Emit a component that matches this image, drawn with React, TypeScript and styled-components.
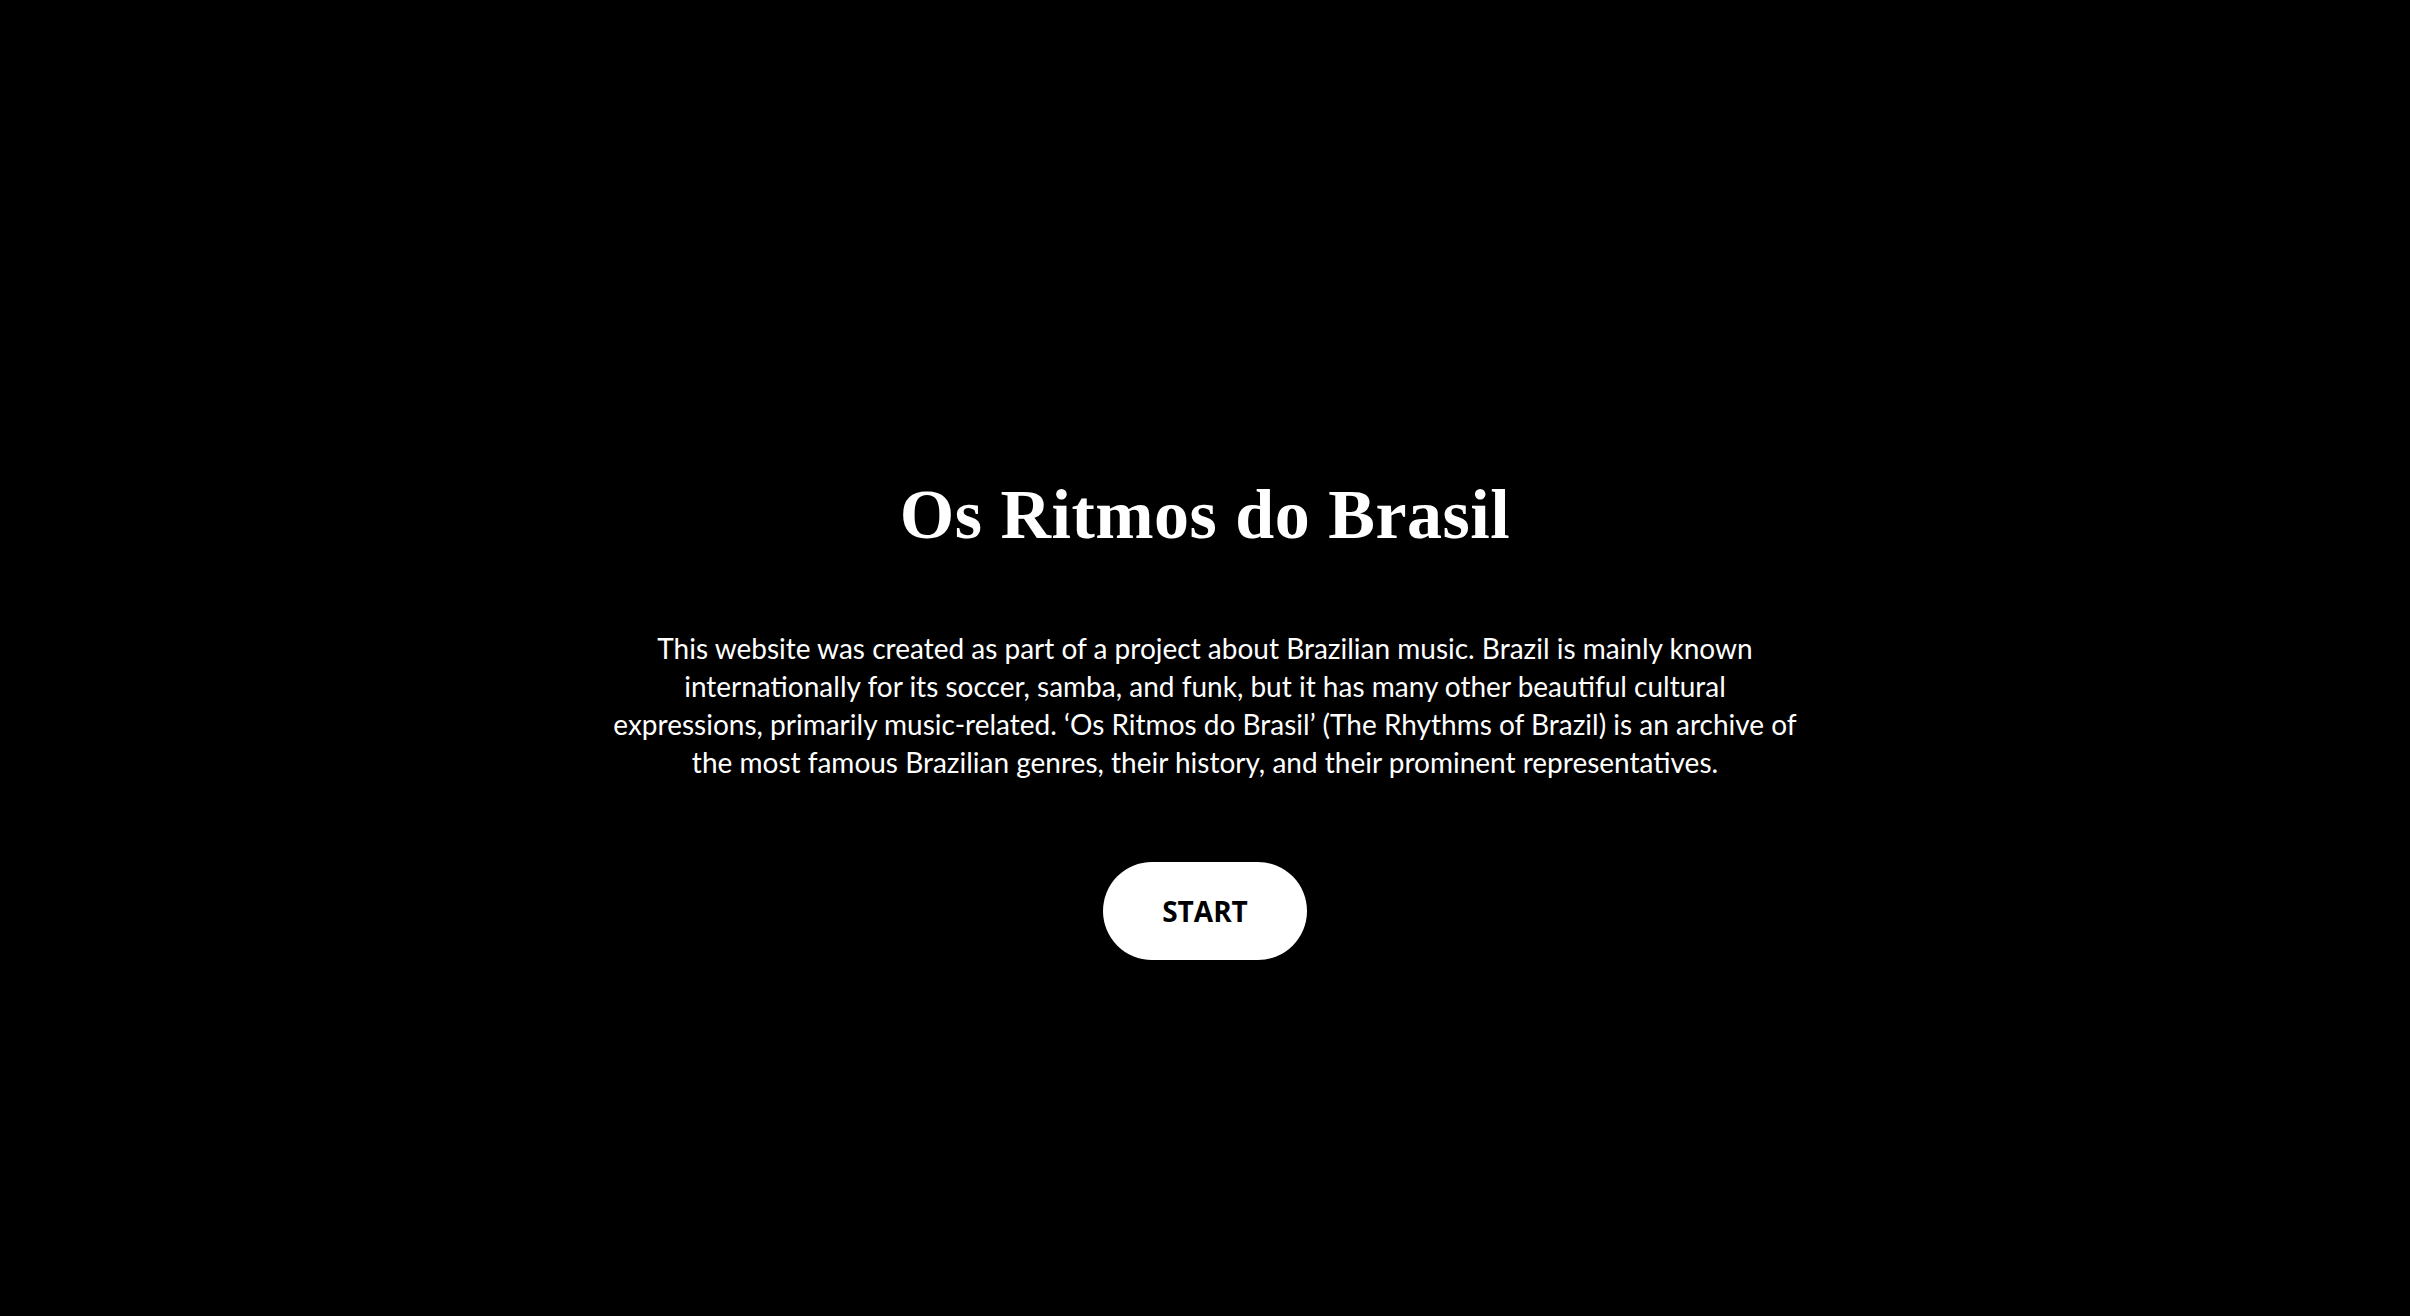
import React from "react";
import styled, { createGlobalStyle } from "styled-components";

const GlobalStyle = createGlobalStyle`
  html, body {
    margin: 0;
    padding: 0;
    background: #000;
  }
  body {
    font-family: "Lato", "Open Sans", sans-serif;
  }
`;

const Page = styled.main`
  min-height: 100vh;
  background: #000;
  color: #fff;
  display: flex;
  flex-direction: column;
  align-items: center;
  padding-top: 470px;
  box-sizing: border-box;
`;

const Title = styled.h1`
  margin: 0;
  font-family: "Liberation Serif", "DejaVu Serif", serif;
  font-weight: 700;
  font-size: 70px;
  line-height: 90px;
  letter-spacing: 0.5px;
`;

const Intro = styled.p`
  margin: 69px 0 0;
  text-align: center;
  font-family: "Lato", "Open Sans", sans-serif;
  font-size: 28px;
  line-height: 38px;
`;

const StartButton = styled.button`
  margin-top: 81px;
  width: 204px;
  height: 98px;
  border: none;
  border-radius: 49px;
  background: #fff;
  color: #000;
  font-family: "Open Sans", "Lato", sans-serif;
  font-weight: 700;
  font-size: 28px;
  cursor: pointer;
`;

export default function App() {
  return (
    <>
      <GlobalStyle />
      <Page>
        <Title>Os Ritmos do Brasil</Title>
        <Intro>
          This website was created as part of a project about Brazilian music. Brazil is mainly known
          <br />
          internationally for its soccer, samba, and funk, but it has many other beautiful cultural
          <br />
          expressions, primarily music-related. ‘Os Ritmos do Brasil’ (The Rhythms of Brazil) is an archive of
          <br />
          the most famous Brazilian genres, their history, and their prominent representatives.
        </Intro>
        <StartButton>START</StartButton>
      </Page>
    </>
  );
}
